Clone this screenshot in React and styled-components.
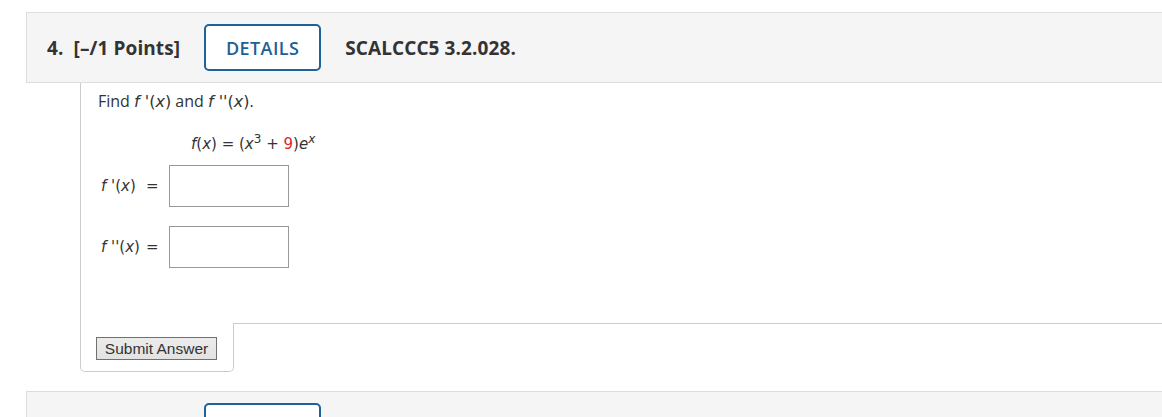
import React from "react";
import styled, { createGlobalStyle } from "styled-components";

const GlobalStyle = createGlobalStyle`
  body {
    margin: 0;
    background: #fff;
    font-family: "Open Sans", "Liberation Sans", sans-serif;
    color: #333;
  }
`;

const Page = styled.div`
  padding: 12px 0 0 26px;
  overflow: hidden;
  height: 405px;
`;

const Question = styled.section`
  margin-bottom: 19px;
`;

const Header = styled.div`
  display: flex;
  align-items: center;
  height: 69px;
  padding-left: 20px;
  background: #f5f5f5;
  border: 1px solid #ddd;
  border-right: none;
  font-size: 19px;
  font-weight: 700;
  letter-spacing: 0.1px;
  color: #333;
`;

const HeaderText = styled.span`
  visibility: ${(p) => (p.$hidden ? "hidden" : "visible")};
  white-space: pre;
`;

const Details = styled.button`
  box-sizing: border-box;
  width: 117px;
  height: 47px;
  margin: 0 24px 0 24px;
  border: 2px solid #1f6299;
  border-radius: 5px;
  background: #fff;
  color: #1f5f93;
  font-family: "Open Sans", sans-serif;
  font-size: 18px;
  font-weight: 600;
  letter-spacing: 0.4px;
  cursor: pointer;
`;

const Body = styled.div`
  margin-left: 54px;
`;

const Content = styled.div`
  border-left: 1px solid #ccc;
  padding: 7px 0 55px 17px;
`;

const Prompt = styled.p`
  margin: 0;
  height: 22px;
  font-size: 16px;
  line-height: 22px;
`;

const Math = styled.span`
  font-family: "DejaVu Sans", Verdana, sans-serif;
  font-size: ${(p) => p.$size || 15}px;
  line-height: 1;
  color: #333;
  white-space: nowrap;
`;

const Formula = styled.div`
  margin-top: 20px;
  height: 22px;
  padding-left: 93px;
  line-height: 22px;
`;

const Red = styled.span`
  color: #d9262c;
`;

const Sup = styled.sup`
  font-size: 12px;
  line-height: 0;
`;

const AnswerRow = styled.div`
  display: flex;
  align-items: center;
  gap: 10px;
  margin-top: ${(p) => (p.$first ? "11px" : "19px")};
  padding-left: 3px;
`;

const Label = styled(Math)`
  width: 35px;
`;

const AnswerBox = styled.input`
  box-sizing: border-box;
  width: 120px;
  height: 42px;
  margin: 0;
  border: 1px solid #999;
  background: #fff;
`;

const Footer = styled.div`
  display: flex;
`;

const SubmitArea = styled.div`
  width: 121px;
  padding: 14px 16px 11px 15px;
  border: 1px solid #ccc;
  border-top: none;
  border-radius: 0 0 5px 5px;
`;

const FooterRest = styled.div`
  flex: 1;
  border-top: 1px solid #ccc;
`;

const Submit = styled.button`
  box-sizing: border-box;
  width: 121px;
  height: 23px;
  padding: 0;
  border: 1px solid #707070;
  background: linear-gradient(#ececec, #e2e2e2);
  color: #333;
  font-family: "Liberation Sans", Arial, sans-serif;
  font-size: 15.5px;
  line-height: 21px;
`;

const I = styled.i`
  font-style: italic;
`;

const App = () => {
  return (
    <>
      <GlobalStyle />
      <Page>
        <Question>
          <Header>
            <HeaderText>{"4.  [–/1 Points]"}</HeaderText>
            <Details>DETAILS</Details>
            <HeaderText>SCALCCC5 3.2.028.</HeaderText>
          </Header>
          <Body>
            <Content>
              <Prompt>
                Find{" "}
                <Math $size={16}>
                  <I>f</I> '(<I>x</I>)
                </Math>{" "}
                and{" "}
                <Math $size={16}>
                  <I>f</I> ''(<I>x</I>)
                </Math>
                .
              </Prompt>
              <Formula>
                <Math>
                  <I>f</I>(<I>x</I>) = (<I>x</I>
                  <Sup>3</Sup> + <Red>9</Red>)<I>e</I>
                  <Sup>
                    <I>x</I>
                  </Sup>
                </Math>
              </Formula>
              <AnswerRow $first>
                <Label>
                  <I>f</I> '(<I>x</I>)
                </Label>
                <Math>=</Math>
                <AnswerBox type="text" />
              </AnswerRow>
              <AnswerRow>
                <Label>
                  <I>f</I> ''(<I>x</I>)
                </Label>
                <Math>=</Math>
                <AnswerBox type="text" />
              </AnswerRow>
            </Content>
            <Footer>
              <SubmitArea>
                <Submit>Submit Answer</Submit>
              </SubmitArea>
              <FooterRest />
            </Footer>
          </Body>
        </Question>
        <Question>
          <Header>
            <HeaderText $hidden>{"5.  [–/1 Points]"}</HeaderText>
            <Details />
          </Header>
        </Question>
      </Page>
    </>
  );
};

export default App;
